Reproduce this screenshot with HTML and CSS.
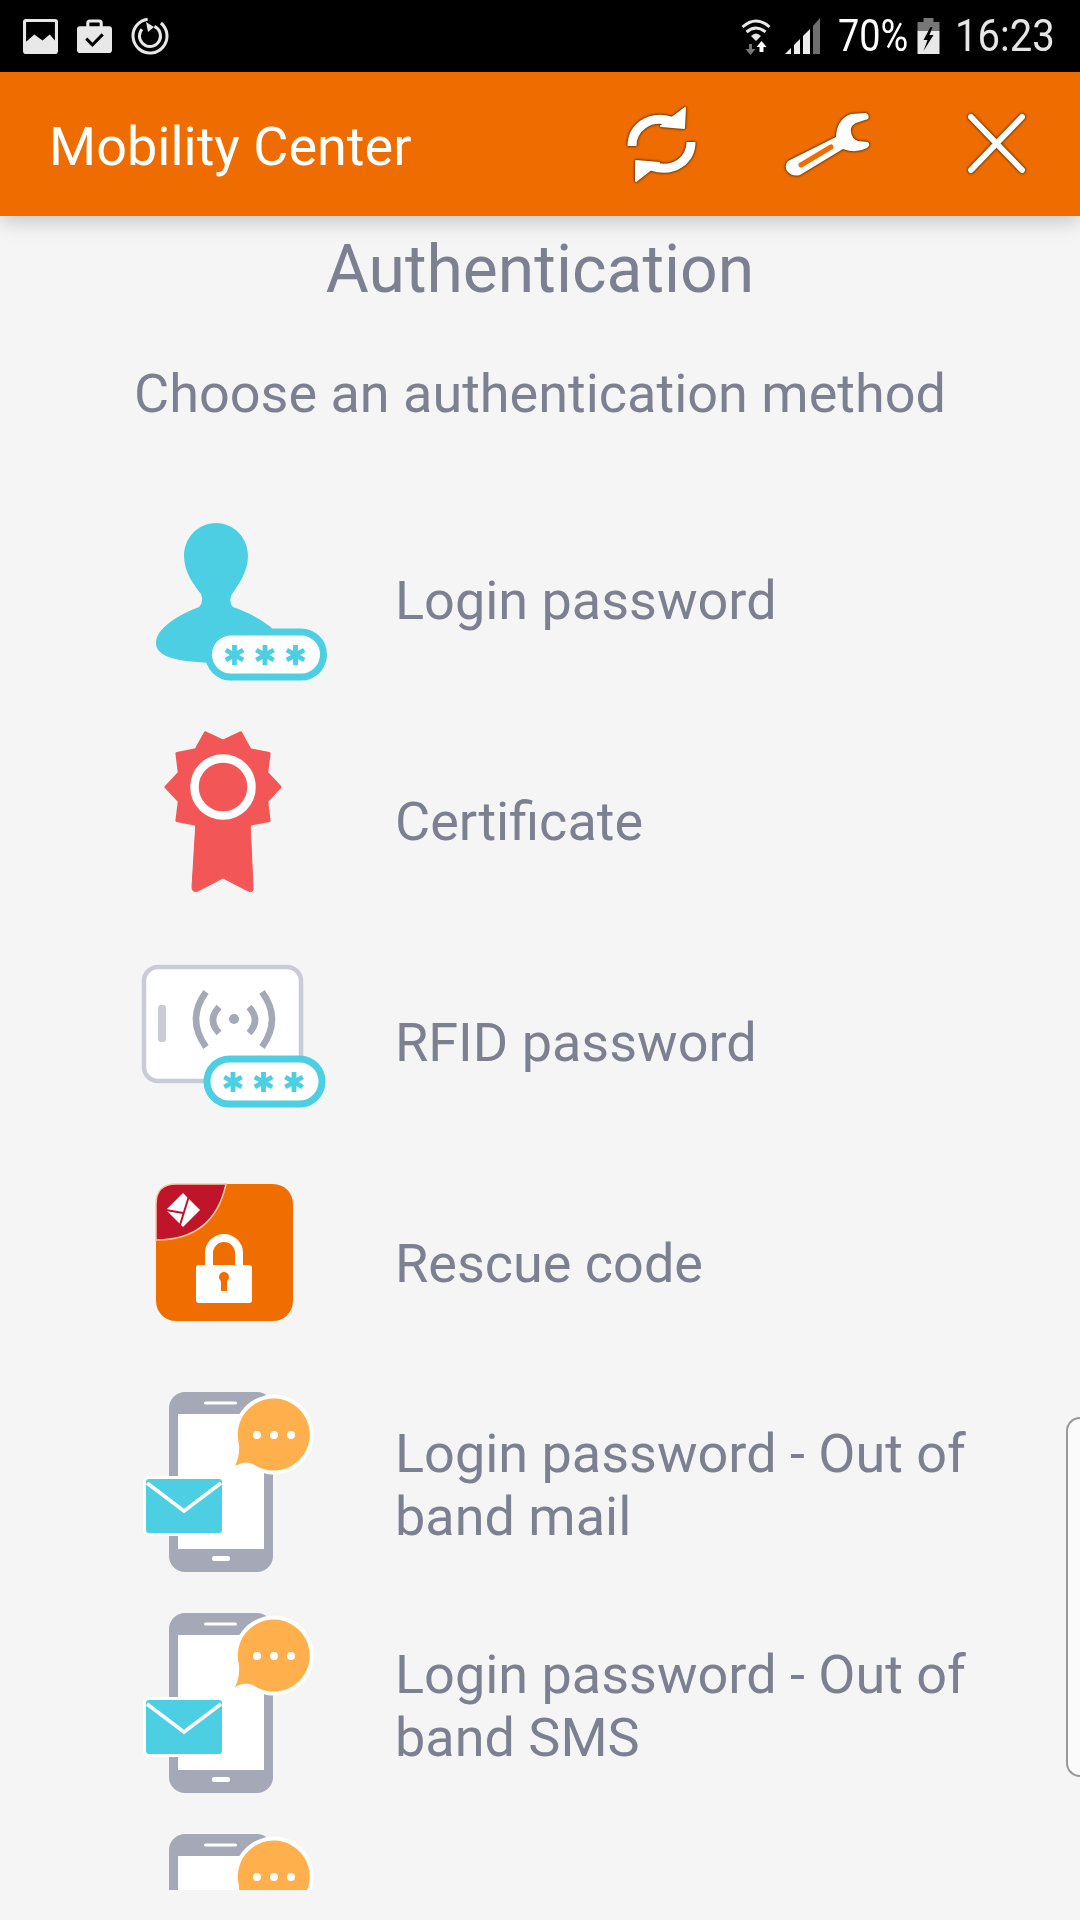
FILE: index.html
```html
<!DOCTYPE html>
<html lang="en">
<head>
    <meta charset="UTF-8">
    <meta name="viewport" content="width=device-width, initial-scale=1.0">
    <title>Mobility Center</title>
    <link rel="stylesheet" href="styles.css">
</head>
<body>
    <!-- shared icon parts -->
    <svg class="sprites" xmlns="http://www.w3.org/2000/svg">
        <defs>
            <path id="star" d="M0 -10V10M-8.700 -5L8.700 5M-8.700 5L8.700 -5"/>
            <g id="pill">
                <rect x="0" y="0" width="115" height="45" rx="22.500" fill="#fff" stroke="#4ccfe3" stroke-width="7"/>
                <use href="#star" x="26" y="23" fill="none" stroke="#4ccfe3" stroke-width="4.800"/>
                <use href="#star" x="56.500" y="23" fill="none" stroke="#4ccfe3" stroke-width="4.800"/>
                <use href="#star" x="87" y="23" fill="none" stroke="#4ccfe3" stroke-width="4.800"/>
            </g>
            <g id="phone">
                <rect x="49" y="18" width="104" height="180" rx="16" fill="#a4a8b7"/>
                <rect x="58" y="40" width="86" height="135" fill="#fff"/>
                <rect x="84" y="27.500" width="33" height="3" rx="1.500" fill="#fff"/>
                <rect x="92" y="182" width="18" height="5" rx="2" fill="#fff"/>
                <path d="M115 92Q120 82 119 70A36 36 0 1 1 133 90Q124 86 115 92Z" fill="#ffb04d" stroke="#fff" stroke-width="8" stroke-linejoin="round" paint-order="stroke"/>
                <circle cx="137" cy="61" r="4" fill="#fff"/>
                <circle cx="154" cy="61" r="4" fill="#fff"/>
                <circle cx="171" cy="61" r="4" fill="#fff"/>
                <rect x="26" y="105" width="76" height="54" rx="3" fill="#4ccfe3" stroke="#fff" stroke-width="6" paint-order="stroke"/>
                <path d="M27 109L64 137L101 109" fill="none" stroke="#fff" stroke-width="3.500"/>
            </g>
        </defs>
    </svg>

    <div class="status-bar">
        <div class="status-left">
            <svg width="35" height="35" viewBox="0 0 34 34">
                <rect width="34" height="34" rx="3" fill="#e8e8e8"/>
                <polygon points="3,3 31,3 31,21 26,15 19,21 11,15 3,22" fill="#000"/>
            </svg>
            <svg width="35" height="35" viewBox="0 0 34 34">
                <rect y="7" width="34" height="26" rx="3" fill="#e8e8e8"/>
                <rect x="10.500" y="2" width="13" height="8" rx="2" fill="none" stroke="#e8e8e8" stroke-width="3"/>
                <path d="M9 19L15 25L25 15" fill="none" stroke="#000" stroke-width="3"/>
            </svg>
            <svg width="38" height="38" viewBox="0 0 38 38">
                <circle cx="19" cy="19" r="17" fill="none" stroke="#e8e8e8" stroke-width="3" stroke-dasharray="92 15" transform="rotate(-50 19 19)"/>
                <circle cx="19" cy="19" r="10.500" fill="none" stroke="#e8e8e8" stroke-width="3" stroke-dasharray="52 14" transform="rotate(-65 19 19)"/>
                <path d="M15 5L23 10L17 15Z" fill="#e8e8e8"/>
            </svg>
        </div>
        <div class="status-right">
            <svg class="wifi" width="31" height="37" viewBox="0 0 30 37">
                <g fill="none" stroke="#e8e8e8" stroke-width="3">
                    <path d="M1 9Q14.500 -3 28 9"/>
                    <path d="M5 14Q14.500 6 24 14"/>
                </g>
                <path d="M9.500 18Q14.500 13 19.500 18L14.500 23Z" fill="#e8e8e8"/>
                <path d="M7.500 26H10.500V31H14L9 37L4 31H7.500Z" fill="#777"/>
                <path d="M20 23L25 29H22V34H18V29H15Z" fill="#fff"/>
            </svg>
            <svg class="signal" width="36" height="37" viewBox="0 0 36 37">
                <polygon points="0,36 6,30 6,36" fill="#eee"/>
                <polygon points="9,27 15,21 15,36 9,36" fill="#eee"/>
                <polygon points="18,18 25,11 25,36 18,36" fill="#eee"/>
                <polygon points="28,8 35,0 35,36 28,36" fill="#6f6f6f"/>
            </svg>
            <span class="percent">70%</span>
            <svg class="battery" width="23" height="36" viewBox="0 0 22 36">
                <rect x="6" width="10" height="5" fill="#777"/>
                <rect y="4" width="22" height="9" fill="#777"/>
                <rect y="13" width="22" height="23" fill="#e8e8e8"/>
                <polygon points="13,9 6,22 10,22 6,33 16,17 12,17 15,9" fill="#000"/>
            </svg>
            <span class="clock">16:23</span>
        </div>
    </div>

    <header class="app-header">
        <div class="app-title">Mobility Center</div>
        <svg class="tool refresh" width="80" height="80" viewBox="0 0 80 80">
            <g fill="none" stroke="#fff" stroke-width="9">
                <path d="M9 42C9 25 25 10 48 17"/>
                <path d="M68 38C68 55 52 70 28 62"/>
            </g>
            <g fill="#fff" stroke="#fff" stroke-width="2" stroke-linejoin="round">
                <polygon points="62,4 61,24 38,22"/>
                <polygon points="13,77 13,57 36,59"/>
            </g>
        </svg>
        <svg class="tool wrench" width="90" height="70" viewBox="0 0 90 70">
            <path d="M4 52L52 28C52 18 57 8 67 5L82 4Q86 6 84 10L72 14Q66 17 67 23Q68 30 74 32L84 33Q87 36 83 39Q72 45 59 40L16 66Q8 68 3 62Q0 56 4 52Z" fill="#fff"/>
            <path d="M17 56L47 38" stroke="#ef6c00" stroke-width="5" stroke-linecap="round"/>
        </svg>
        <svg class="tool close" width="64" height="64" viewBox="0 0 64 64">
            <path d="M6 5L57 58M57 5L6 58" stroke="#fff" stroke-width="6" stroke-linecap="round"/>
        </svg>
    </header>

    <main class="content">
        <h1 class="page-title">Authentication</h1>
        <p class="page-subtitle">Choose an authentication method</p>

        <ul class="method-list">
            <li class="method">
                <svg class="method-icon" viewBox="0 0 240 221">
                    <path d="M96 33C78 33 64 48 64 66C64 82 74 95 81 104Q84 112 79 117C60 124 36 138 36 153C36 168 60 172 96 173L130 173L152 138C142 130 128 122 113 117Q108 112 112 104C118 95 128 82 128 66C128 48 114 33 96 33Z" fill="#4ccfe3"/>
                    <use href="#pill" x="88.500" y="142"/>
                </svg>
                <span class="method-name">Login password</span>
            </li>
            <li class="method">
                <svg class="method-icon" viewBox="0 0 240 221">
                    <path d="M76 110L72 176Q72 182 78 180L103 167L128 180Q134 182 133 176L130 110Z" fill="#f35656" stroke="#f35656" stroke-linejoin="round"/>
                    <polygon points="160,76 146.700,90.200 149.100,109.500 130,113.200 120.600,130.200 103,122 85.400,130.200 76,113.200 56.900,109.500 59.300,90.200 46,76 59.300,61.800 56.900,42.500 76,38.800 85.400,21.800 103,30 120.600,21.800 130,38.800 149.100,42.500 146.700,61.800" fill="#f35656" stroke="#f35656" stroke-width="3" stroke-linejoin="round"/>
                    <circle cx="103" cy="76" r="28.500" fill="none" stroke="#fff" stroke-width="8.500"/>
                </svg>
                <span class="method-name">Certificate</span>
            </li>
            <li class="method">
                <svg class="method-icon" viewBox="0 0 240 221">
                    <rect x="24" y="35" width="157" height="114" rx="14" fill="#fff" stroke="#c9ccd6" stroke-width="4.500"/>
                    <rect x="38" y="73" width="8" height="37" rx="3" fill="#c9ccd6"/>
                    <g fill="none" stroke="#a4a8b7" stroke-width="6.500">
                        <path d="M86 60Q66 87 86 115"/>
                        <path d="M99 75Q87 88 99 101"/>
                        <path d="M129 75Q141 88 129 101"/>
                        <path d="M142 60Q162 87 142 115"/>
                    </g>
                    <circle cx="114" cy="87" r="5" fill="#a4a8b7"/>
                    <use href="#pill" x="87" y="127"/>
                </svg>
                <span class="method-name">RFID password</span>
            </li>
            <li class="method">
                <svg class="method-icon" viewBox="0 0 240 221">
                    <rect x="36" y="31" width="137" height="137" rx="20" fill="#f06e00"/>
                    <path d="M106 31H56Q36 31 36 51V87Q94 87 106 31Z" fill="#c0142a" stroke="#f9c99f" stroke-width="1.500"/>
                    <polygon points="63,40 80,57 63,74 46,57" fill="#fff"/>
                    <path d="M69 43L60 72M46 57L63 60" stroke="#c0142a" stroke-width="2"/>
                    <path d="M89 114V100A15 15 0 0 1 119 100V114" fill="none" stroke="#fff" stroke-width="8"/>
                    <rect x="76" y="112" width="56" height="38" rx="3" fill="#fff"/>
                    <circle cx="104" cy="124" r="5" fill="#f06e00"/>
                    <rect x="101" y="125" width="6" height="13" fill="#f06e00"/>
                </svg>
                <span class="method-name">Rescue code</span>
            </li>
            <li class="method">
                <svg class="method-icon" viewBox="0 0 240 221"><use href="#phone"/></svg>
                <span class="method-name">Login password - Out of band mail</span>
            </li>
            <li class="method">
                <svg class="method-icon" viewBox="0 0 240 221"><use href="#phone"/></svg>
                <span class="method-name">Login password - Out of band SMS</span>
            </li>
            <li class="method">
                <svg class="method-icon" viewBox="0 0 240 221"><use href="#phone"/></svg>
            </li>
        </ul>
    </main>

    <div class="edge-handle"></div>
</body>
</html>
```

FILE: styles.css
```css
body {
    margin: 0;
    height: 1920px;
    overflow: hidden;
    position: relative;
    background-color: #f5f5f5;
    font-family: Roboto, "Liberation Sans", sans-serif;
    color: #7d8090;
}

.sprites {
    display: none;
}

.status-bar {
    height: 72px;
    background-color: #000;
    display: flex;
    align-items: center;
    justify-content: space-between;
    padding: 0 30px 0 23px;
}

.status-left {
    display: flex;
    align-items: center;
    gap: 19px;
}

.status-right {
    display: flex;
    align-items: center;
    color: #e6e6e6;
    font-size: 44px;
}

.signal {
    margin-left: 13px;
}

.percent {
    margin-left: 17px;
    width: 68px;
    display: inline-block;
    transform: scaleX(0.86);
    transform-origin: left center;
    color: #fff;
}

.battery {
    margin-left: 11px;
}

.clock {
    margin-left: 15px;
    width: 95px;
    display: inline-block;
    transform: scaleX(0.91);
    transform-origin: left center;
}

.app-header {
    height: 144px;
    background-color: #ef6c00;
    display: flex;
    align-items: center;
    padding: 0 51px 0 49px;
    color: #fff;
    position: relative;
    box-shadow: 0 4px 20px rgba(0, 0, 0, 0.22);
}

.app-title {
    font-size: 54px;
    padding-top: 4px;
    margin-right: auto;
}

.tool {
    filter: drop-shadow(0 0 1px #6b3500) drop-shadow(0 0 1px #6b3500);
}

.refresh {
    margin-right: 81px;
}

.wrench {
    margin-right: 91px;
}

.content {
    height: 1674px;
    overflow: hidden;
}

.page-title {
    margin: 0;
    padding-top: 16px;
    text-align: center;
    font-size: 66px;
    font-weight: 400;
    line-height: 76px;
}

.page-subtitle {
    margin: 0;
    padding-top: 55px;
    text-align: center;
    font-size: 54px;
    line-height: 62px;
}

.method-list {
    list-style: none;
    margin: 0;
    padding: 0;
    padding-top: 65px;
}

.method {
    height: 221px;
    display: flex;
    align-items: center;
    padding-left: 120px;
    padding-right: 100px;
}

.method-icon {
    width: 240px;
    height: 221px;
    flex: none;
    overflow: visible;
}

.method-name {
    margin-left: 35px;
    font-size: 54px;
    line-height: 63px;
}

.edge-handle {
    position: absolute;
    top: 1417px;
    right: 0;
    width: 12px;
    height: 356px;
    background-color: #fbfbfb;
    border: 2px solid #999;
    border-right: none;
    border-radius: 20px 0 0 20px;
}
```
